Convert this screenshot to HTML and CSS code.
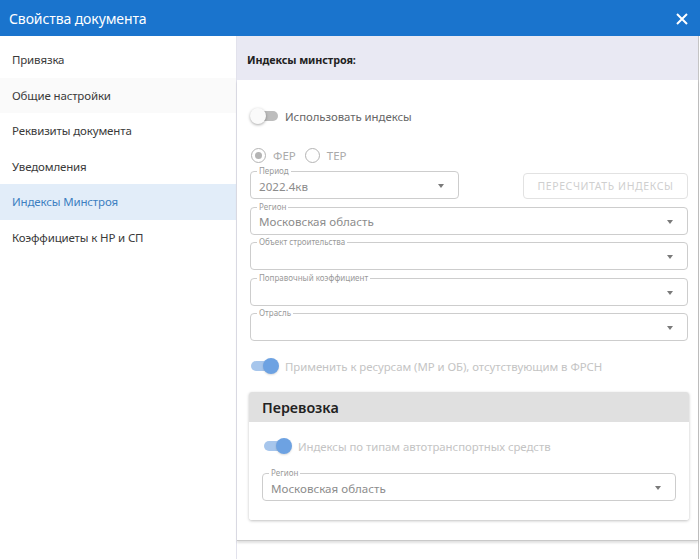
FILE: index.html
```html
<!DOCTYPE html>
<html lang="ru">
<head>
<meta charset="utf-8">
<title>Свойства документа</title>
<link rel="stylesheet" href="styles.css">
</head>
<body>
<div class="window">
  <header class="titlebar">
    <span class="title">Свойства документа</span>
    <svg class="close" width="12" height="12" viewBox="0 0 12 12"><path d="M1 1 L11 11 M11 1 L1 11" stroke="#fff" stroke-width="2" fill="none"/></svg>
  </header>
  <div class="main">
    <nav class="sidebar">
      <div class="nav-item">Привязка</div>
      <div class="nav-item hover">Общие настройки</div>
      <div class="nav-item">Реквизиты документа</div>
      <div class="nav-item">Уведомления</div>
      <div class="nav-item active">Индексы Минстроя</div>
      <div class="nav-item">Коэффициеты к НР и СП</div>
    </nav>
    <section class="content">
      <div class="content-head">Индексы минстроя:</div>
      <div class="content-body">
        <div class="switch-row first">
          <span class="switch off"><span class="track"></span><span class="thumb"></span></span>
          <span class="switch-label">Использовать индексы</span>
        </div>
        <div class="radio-row">
          <span class="radio checked"></span><span class="radio-label">ФЕР</span>
          <span class="radio"></span><span class="radio-label">ТЕР</span>
        </div>
        <div class="period-row">
          <div class="field period">
            <span class="field-label">Период</span>
            <span class="field-value">2022.4кв</span>
            <span class="arrow"></span>
          </div>
          <button class="btn" disabled>ПЕРЕСЧИТАТЬ ИНДЕКСЫ</button>
        </div>
        <div class="field">
          <span class="field-label">Регион</span>
          <span class="field-value">Московская область</span>
          <span class="arrow"></span>
        </div>
        <div class="field">
          <span class="field-label">Объект строительства</span>
          <span class="field-value"></span>
          <span class="arrow"></span>
        </div>
        <div class="field">
          <span class="field-label">Поправочный коэффициент</span>
          <span class="field-value"></span>
          <span class="arrow"></span>
        </div>
        <div class="field">
          <span class="field-label">Отрасль</span>
          <span class="field-value"></span>
          <span class="arrow"></span>
        </div>
        <div class="switch-row second">
          <span class="switch on"><span class="track"></span><span class="thumb"></span></span>
          <span class="switch-label disabled">Применить к ресурсам (МР и ОБ), отсутствующим в ФРСН</span>
        </div>
        <div class="card">
          <div class="card-head">Перевозка</div>
          <div class="card-body">
            <div class="switch-row">
              <span class="switch on"><span class="track"></span><span class="thumb"></span></span>
              <span class="switch-label disabled">Индексы по типам автотранспортных средств</span>
            </div>
            <div class="field card-field">
              <span class="field-label">Регион</span>
              <span class="field-value">Московская область</span>
              <span class="arrow"></span>
            </div>
          </div>
        </div>
      </div>
    </section>
  </div>
</div>
</body>
</html>
```

FILE: styles.css
```css
* { box-sizing: border-box; }
html, body { margin: 0; padding: 0; }
body {
  width: 700px;
  height: 559px;
  overflow: hidden;
  background: #fff;
  font-family: "Noto Sans", "Open Sans", sans-serif;
  color: #333;
}
.window { display: flex; flex-direction: column; height: 559px; }
.titlebar {
  height: 36px;
  background: #1a74cd;
  display: flex;
  align-items: center;
  justify-content: space-between;
  padding: 0 12px 0 9px;
  flex-shrink: 0;
}
.title { color: #fff; font-size: 14px; letter-spacing: -0.1px; margin-top: 1px; }
.close { display: block; margin-top: 1px; }
.main { display: flex; flex: 1; min-height: 0; }
.sidebar { width: 236px; flex-shrink: 0; padding-top: 6px; background: #fff; }
.nav-item {
  height: 35.5px;
  display: flex;
  align-items: center;
  padding-left: 12px;
  font-size: 11.5px;
  color: #3a3a3a;
  letter-spacing: -0.15px;
}
.nav-item.hover { background: #fafafa; }
.nav-item.active { background: #e2edf9; color: #3d7fc1; }
.content {
  flex: 1;
  border-left: 1px solid #e2e2ec;
  border-right: 1px solid #c4c4c4;
  margin-right: 1px;
  display: flex;
  flex-direction: column;
}
.content-head {
  height: 44px;
  background: #e9e9f3;
  display: flex;
  align-items: center;
  padding: 3px 0 0 10px;
  font-size: 10.8px;
  font-weight: 700;
  color: #222;
  letter-spacing: -0.1px;
}
.content-body {
  padding: 26px 10px 20px 13px;
  border-bottom: 1px solid #c9c9c9;
  box-shadow: 0 2px 2px rgba(0,0,0,0.12);
}
.switch-row { display: flex; align-items: center; height: 20px; }
.switch { position: relative; width: 29px; height: 16px; flex-shrink: 0; }
.switch .track {
  position: absolute; left: 1px; right: 1px; top: 3px; height: 10px;
  border-radius: 5px;
}
.switch .thumb {
  position: absolute; top: 0; width: 16px; height: 16px; border-radius: 50%;
}
.switch.off .track { background: #bdbdbd; }
.switch.off .thumb { left: 0; background: #fafafa; box-shadow: 0 1px 3px rgba(0,0,0,0.35); }
.switch.on .track { background: #a7c6ec; }
.switch.on .thumb { right: 0; background: #6da2e2; box-shadow: 0 1px 2px rgba(0,0,0,0.15); }
.switch-label { margin-left: 6px; font-size: 11.4px; color: #666; letter-spacing: -0.05px; }
.switch-label.disabled { color: #c4c4c4; }
.radio-row { display: flex; align-items: center; height: 20px; margin-top: 19px; padding-left: 1px; }
.radio {
  width: 15px; height: 15px; border-radius: 50%;
  border: 1.5px solid #b4b4b4;
  display: flex; align-items: center; justify-content: center;
}
.radio.checked::after {
  content: ""; width: 7px; height: 7px; border-radius: 50%; background: #b4b4b4;
}
.radio-label { margin: 0 9px 0 7px; font-size: 11.5px; color: #aaa; }
.period-row { display: flex; justify-content: space-between; align-items: flex-end; margin-top: 6px; }
.field {
  position: relative;
  height: 28px;
  border: 1px solid #cdcdcd;
  border-radius: 4px;
  display: flex;
  align-items: center;
  padding: 2px 14px 0 8px;
  margin-top: 7.5px;
}
.period-row .field { margin-top: 0; width: 209px; }
.field-label {
  position: absolute;
  left: 6px;
  top: -6px;
  font-size: 8px;
  line-height: 10px;
  color: #9a9a9a;
  background: #fff;
  padding: 0 2px;
}
.field-value { flex: 1; font-size: 11.6px; color: #8c8c8c; }
.arrow {
  width: 0; height: 0;
  border-left: 3.5px solid transparent;
  border-right: 3.5px solid transparent;
  border-top: 4px solid #7a7a7a;
}
.btn {
  width: 165px; height: 26px;
  border: 1px solid #e2e2e2; border-radius: 4px;
  background: #fff;
  font-family: inherit;
  font-size: 10.5px; letter-spacing: 0.6px;
  color: #cfcfcf;
  padding: 0;
}
.switch-row.second { margin-top: 15px; }
.card {
  margin: 16px -1px 0 -1px;
  border-radius: 3px;
  box-shadow: 0 1px 3px rgba(0,0,0,0.25);
  overflow: hidden;
}
.card-head {
  height: 30px;
  background: #e0e0e0;
  display: flex; align-items: center;
  padding-left: 13px;
  font-size: 14.3px; font-weight: 600; color: #222;
}
.card-body { padding: 14px 13px 19px 13px; background: #fff; }
.card-body .switch-row { padding-left: 1px; }
.card-field { margin-top: 17px; }
```
